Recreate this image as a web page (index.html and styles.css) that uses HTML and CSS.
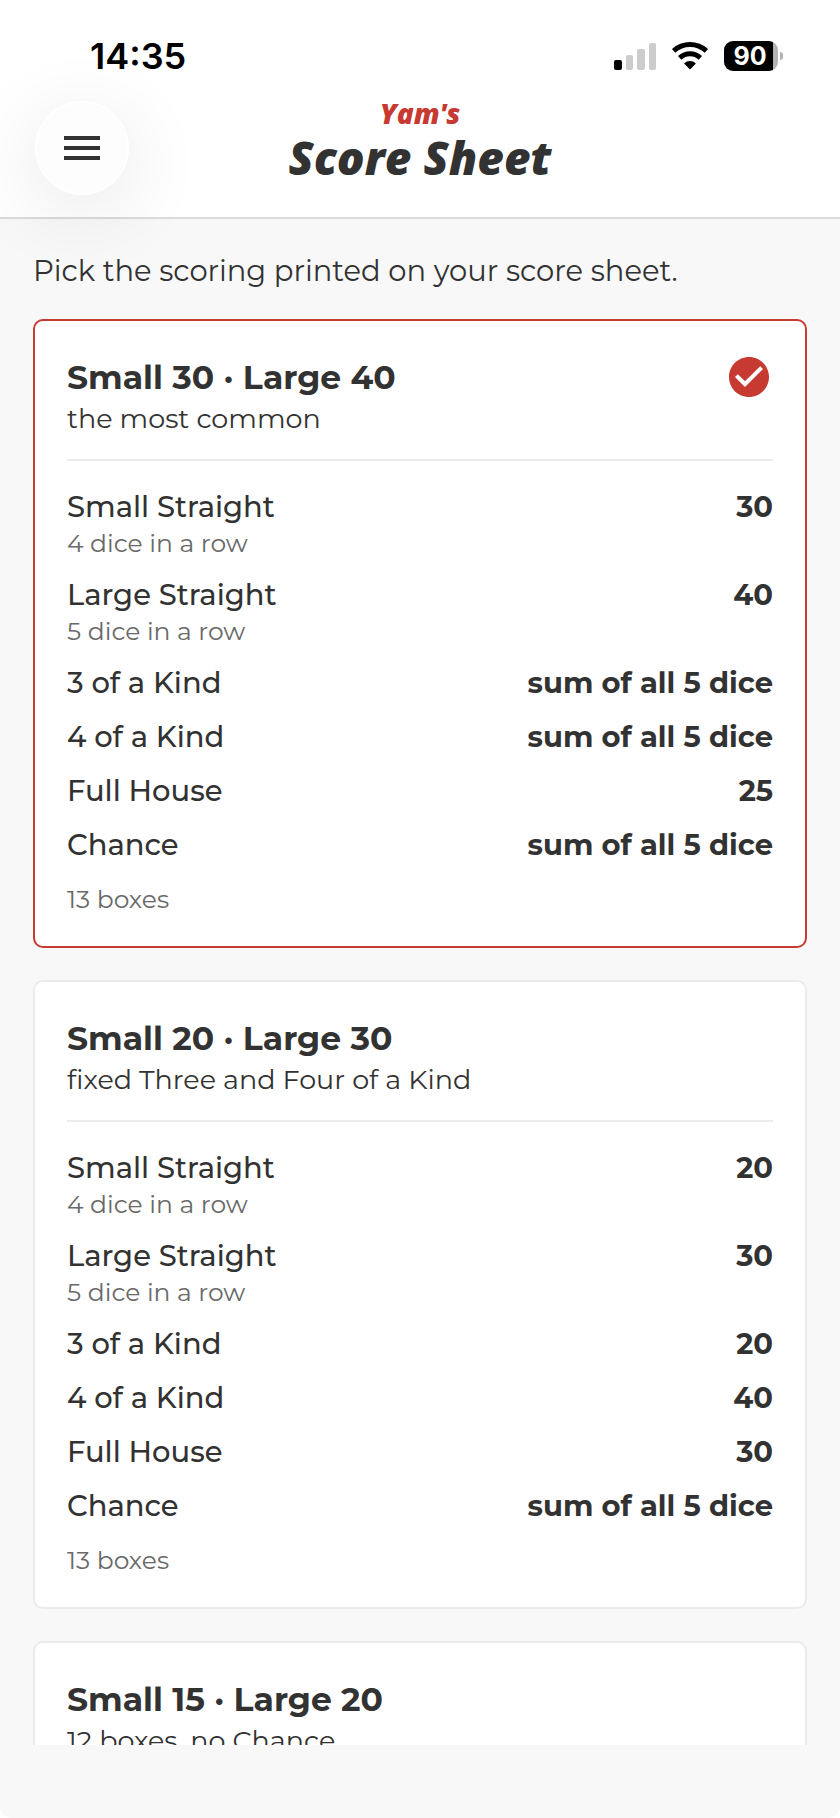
FILE: index.html
```html
<!DOCTYPE html>
<html lang="en">
<head>
    <meta charset="UTF-8">
    <meta name="viewport" content="width=device-width, initial-scale=1.0">
    <title>Yam's Score Sheet</title>
    <link rel="stylesheet" href="styles.css">
</head>
<body>
    <div class="app">
        <header class="header">
            <div class="status-bar">
                <span class="time">14:35</span>
                <div class="status-icons">
                    <svg class="signal" viewBox="0 0 42 28" aria-hidden="true">
                        <rect x="0" y="18" width="8" height="10" rx="2"/>
                        <rect class="off" x="12" y="13" width="7" height="15" rx="2"/>
                        <rect class="off" x="23" y="7" width="8" height="21" rx="2"/>
                        <rect class="off" x="35" y="1" width="7" height="27" rx="2"/>
                    </svg>
                    <svg class="wifi" viewBox="0 0 36 28" aria-hidden="true">
                        <path class="arc" d="M1.6 8.8A24.5 24.5 0 0 1 34.4 8.8"/>
                        <path class="arc" d="M7.7 15.8A15.2 15.2 0 0 1 28.3 15.8"/>
                        <path d="M18 27.4L12.1 21.4A8.5 8.5 0 0 1 23.9 21.4Z"/>
                    </svg>
                    <span class="battery">90</span>
                </div>
            </div>
            <div class="title-bar">
                <button class="menu-button" type="button" aria-label="Menu">
                    <svg viewBox="0 0 24 24" aria-hidden="true">
                        <path d="M3 18h18v-2H3v2zm0-5h18v-2H3v2zm0-7v2h18V6H3z"/>
                    </svg>
                </button>
                <h1 class="title"><span class="brand">Yam's</span> Score Sheet</h1>
            </div>
        </header>

        <main class="content">
            <p class="intro">Pick the scoring printed on your score sheet.</p>

            <section class="card">
                <label class="card-head">
                    <input class="card-radio" type="radio" name="scoring" checked>
                    <span class="card-text">
                        <span class="card-title">Small 30 · Large 40</span>
                        <span class="card-subtitle">the most common</span>
                    </span>
                    <svg class="check" viewBox="0 0 24 24" aria-hidden="true">
                        <path d="M12 2C6.48 2 2 6.48 2 12s4.48 10 10 10 10-4.48 10-10S17.52 2 12 2zm-2 15l-5-5 1.41-1.41L10 14.17l7.59-7.59L19 8l-9 9z"/>
                    </svg>
                </label>
                <table class="scores">
                    <tr><th scope="row">Small Straight <small>4 dice in a row</small></th><td>30</td></tr>
                    <tr><th scope="row">Large Straight <small>5 dice in a row</small></th><td>40</td></tr>
                    <tr><th scope="row">3 of a Kind</th><td>sum of all 5 dice</td></tr>
                    <tr><th scope="row">4 of a Kind</th><td>sum of all 5 dice</td></tr>
                    <tr><th scope="row">Full House</th><td>25</td></tr>
                    <tr><th scope="row">Chance</th><td>sum of all 5 dice</td></tr>
                </table>
                <p class="boxes">13 boxes</p>
            </section>

            <section class="card">
                <label class="card-head">
                    <input class="card-radio" type="radio" name="scoring">
                    <span class="card-text">
                        <span class="card-title">Small 20 · Large 30</span>
                        <span class="card-subtitle">fixed Three and Four of a Kind</span>
                    </span>
                </label>
                <table class="scores">
                    <tr><th scope="row">Small Straight <small>4 dice in a row</small></th><td>20</td></tr>
                    <tr><th scope="row">Large Straight <small>5 dice in a row</small></th><td>30</td></tr>
                    <tr><th scope="row">3 of a Kind</th><td>20</td></tr>
                    <tr><th scope="row">4 of a Kind</th><td>40</td></tr>
                    <tr><th scope="row">Full House</th><td>30</td></tr>
                    <tr><th scope="row">Chance</th><td>sum of all 5 dice</td></tr>
                </table>
                <p class="boxes">13 boxes</p>
            </section>

            <section class="card">
                <label class="card-head">
                    <input class="card-radio" type="radio" name="scoring">
                    <span class="card-text">
                        <span class="card-title">Small 15 · Large 20</span>
                        <span class="card-subtitle">12 boxes, no Chance</span>
                    </span>
                </label>
            </section>
        </main>
    </div>
</body>
</html>
```
FILE: styles.css
```css
* {
    box-sizing: border-box;
}

body {
    margin: 0;
    background: #ffffff;
    color: #323232;
    font-family: Montserrat, Inter, sans-serif;
}

.app {
    display: flex;
    flex-direction: column;
    height: 100vh;
    padding-bottom: 73px;
    background: #f8f8f8;
    border-radius: 0 0 12px 12px;
}

/* Header */
.header {
    position: relative;
    z-index: 1;
    background: #ffffff;
    border-bottom: 2px solid #dadada;
}

.status-bar {
    display: flex;
    align-items: center;
    justify-content: space-between;
    padding: 34px 57px 0 90px;
}

.time {
    color: #000000;
    font-family: Inter, sans-serif;
    font-size: 36px;
    font-weight: 600;
    line-height: 44px;
}

.status-icons {
    display: flex;
    align-items: center;
    gap: 16px;
}

.signal {
    width: 42px;
    height: 28px;
}

.signal .off {
    fill: #cccccc;
}

.wifi {
    width: 36px;
    height: 28px;
}

.wifi .arc {
    fill: none;
    stroke: #000000;
    stroke-width: 5;
}

.battery {
    position: relative;
    width: 54px;
    height: 30px;
    margin-right: 5px;
    padding-right: 2px;
    border-radius: 9px;
    background: linear-gradient(to right, #000000 49px, #b3b3b3 49px);
    color: #ffffff;
    font-family: Inter, sans-serif;
    font-size: 25px;
    font-weight: 700;
    line-height: 30px;
    text-align: center;
}

.battery::after {
    content: "";
    position: absolute;
    top: 11px;
    right: -5px;
    width: 3px;
    height: 8px;
    border-radius: 0 4px 4px 0;
    background: #b3b3b3;
}

.title-bar {
    display: grid;
    grid-template-columns: 94px 1fr 94px;
    align-items: start;
    padding: 16px 35px 22px;
}

.menu-button {
    display: flex;
    align-items: center;
    justify-content: center;
    width: 94px;
    height: 94px;
    margin-top: 7px;
    padding: 0;
    border: 2px solid #ffffff;
    border-radius: 50%;
    background: #fdfdfd;
    box-shadow: 0 16px 80px rgba(0, 0, 0, 0.1);
    cursor: pointer;
}

.menu-button svg {
    width: 48px;
    height: 48px;
    fill: #323232;
}

.title {
    margin: 0;
    font-family: "Open Sans", sans-serif;
    font-size: 46px;
    font-style: italic;
    font-weight: 800;
    line-height: 50px;
    text-align: center;
}

.brand {
    display: block;
    color: #c63a32;
    font-size: 28px;
    line-height: 38px;
}

/* Scrolling list of scorings */
.content {
    flex: 1;
    min-height: 0;
    padding: 32px 33px;
    overflow-y: auto;
    scrollbar-width: none;
}

.intro {
    margin: 0 0 28px;
    font-size: 29px;
    font-weight: 400;
    line-height: 40px;
}

.card {
    margin-bottom: 32px;
    padding: 32px 32px 30px;
    border: 2px solid #ebebeb;
    border-radius: 10px;
    background: #ffffff;
}

.card:has(.card-radio:checked) {
    border-color: #c63a32;
}

.card-head {
    display: flex;
    align-items: flex-start;
    justify-content: space-between;
    padding-bottom: 22px;
    border-bottom: 2px solid #ebebeb;
    cursor: pointer;
}

.card-radio {
    appearance: none;
    position: absolute;
    margin: 0;
}

.card-title,
.card-subtitle {
    display: block;
}

.card-title {
    font-size: 33px;
    font-weight: 700;
    line-height: 48px;
}

.card-subtitle {
    font-size: 27px;
    font-weight: 400;
    line-height: 36px;
}

.check {
    width: 48px;
    height: 48px;
    fill: #c63a32;
}

.scores {
    width: 100%;
    margin-top: 19px;
    border-collapse: collapse;
    font-size: 29px;
    line-height: 38px;
}

.scores th,
.scores td {
    padding: 8px 0;
    vertical-align: top;
}

.scores th {
    font-weight: 500;
    text-align: left;
}

.scores td {
    font-weight: 700;
    text-align: right;
}

.scores small {
    display: block;
    color: #696969;
    font-size: 25px;
    font-weight: 400;
    line-height: 34px;
}

.boxes {
    margin: 10px 0 0;
    color: #696969;
    font-size: 25px;
    font-weight: 400;
    line-height: 34px;
}
```
